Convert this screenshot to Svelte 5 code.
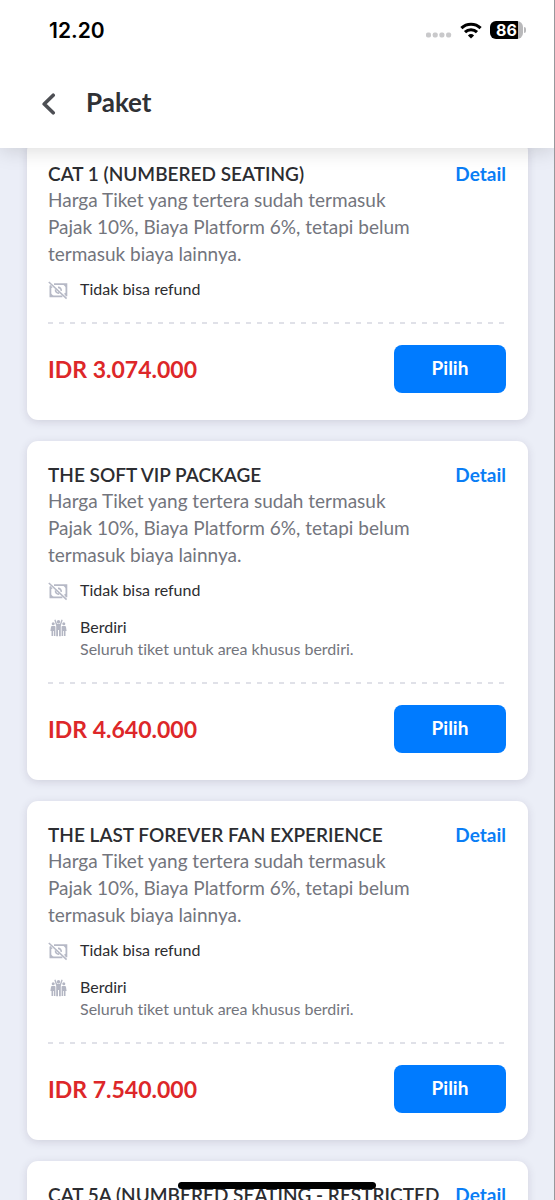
<script lang="ts">
  type Feature = { icon: 'no-refund' | 'standing'; label: string; note?: string };
  type Ticket = { name: string; price: string; features: Feature[] };

  const description =
    'Harga Tiket yang tertera sudah termasuk Pajak 10%, Biaya Platform 6%, tetapi belum termasuk biaya lainnya.';

  const noRefund: Feature = { icon: 'no-refund', label: 'Tidak bisa refund' };
  const standing: Feature = {
    icon: 'standing',
    label: 'Berdiri',
    note: 'Seluruh tiket untuk area khusus berdiri.',
  };

  const tickets: Ticket[] = [
    { name: 'CAT 1 (NUMBERED SEATING)', price: 'IDR 3.074.000', features: [noRefund] },
    { name: 'THE SOFT VIP PACKAGE', price: 'IDR 4.640.000', features: [noRefund, standing] },
    { name: 'THE LAST FOREVER FAN EXPERIENCE', price: 'IDR 7.540.000', features: [noRefund, standing] },
    { name: 'CAT 5A (NUMBERED SEATING - RESTRICTED', price: '', features: [] },
  ];
</script>

<svelte:head>
  <title>Paket</title>
</svelte:head>

<div class="screen">
  <header class="header">
    <div class="status">
      <span class="status__time">12.20</span>
      <div class="status__icons">
        <svg width="26" height="6" viewBox="0 0 26 6" fill="#c9c9cb" aria-hidden="true">
          <rect x="0" y="0.5" width="5" height="5" rx="1.8" />
          <rect x="6.7" y="0.5" width="5" height="5" rx="1.8" />
          <rect x="13.4" y="0.5" width="5" height="5" rx="1.8" />
          <rect x="20.1" y="0.5" width="5" height="5" rx="1.8" />
        </svg>
        <svg width="22" height="17" viewBox="0 0 22 17" fill="none" stroke="#000" stroke-width="3.1" aria-hidden="true">
          <path d="M1.4 6.2a13.8 13.8 0 0 1 19.2 0" />
          <path d="M5 10.1a8.7 8.7 0 0 1 12 0" />
          <path d="M11 16.6l-3.1-3.2a4.5 4.5 0 0 1 6.2 0z" fill="#000" stroke="none" />
        </svg>
        <div class="battery">
          <span class="battery__level">86</span>
        </div>
      </div>
    </div>

    <div class="titlebar">
      <button class="back" type="button" aria-label="Kembali">
        <svg width="14" height="22" viewBox="0 0 14 22" fill="none" stroke="#4d4f54" stroke-width="3.6" stroke-linecap="round" stroke-linejoin="round" aria-hidden="true">
          <path d="M11.2 2.2L2.2 11l9 8.8" />
        </svg>
      </button>
      <h1 class="titlebar__title">Paket</h1>
    </div>
  </header>

  <main class="list">
    {#each tickets as ticket}
      <article class="card">
        <div class="card__head">
          <h2 class="card__name">{ticket.name}</h2>
          <a class="card__detail" href="#detail">Detail</a>
        </div>
        <p class="card__desc">{description}</p>

        <ul class="features">
          {#each ticket.features as feature}
            <li class="feature">
              {#if feature.icon === 'no-refund'}
                <svg class="feature__icon" width="20" height="20" viewBox="0 0 20 20" fill="none" stroke="#b6b9c6" aria-hidden="true">
                  <path d="M6 4.2H18.4v12" stroke-width="1.8" />
                  <path d="M2.4 5.4v11h12" stroke-width="1.8" />
                  <path d="M2 12.6l4 4H2zM14.6 4h4v4z" fill="#b6b9c6" stroke="none" />
                  <path d="M2 8.6V5l2.6 2.4zM18.6 12.6v3.6l-2.8-2.4z" fill="#b6b9c6" stroke="none" />
                  <path d="M10 7.4a3 3 0 0 1 3.2 3.4M7.6 9.4a3 3 0 0 0 3.6 3.6" stroke-width="1.6" />
                  <path d="M0.8 2l17.8 16.6" stroke-width="1.6" />
                </svg>
              {:else}
                <svg class="feature__icon" width="20" height="20" viewBox="0 0 20 20" fill="#b3b6c3" aria-hidden="true">
                  <circle cx="10.5" cy="3.8" r="1.7" />
                  <path d="M6.3 2.1l1.2-.6 1.5 4.3h3l1.5-4.3 1.2.6-1.9 5.6v10.5h-1.8V12h-1v6.2H8.200V7.700z" />
                  <circle cx="5.200" cy="5.800" r="1.500" />
                  <path d="M4 8h2.600c.5 0 .8.3.8.8v9.200H5.800V13h-.8v5H3.500v-5H2.400l.6-4c.1-.6.5-1 1-1z" />
                  <circle cx="15.800" cy="5.800" r="1.500" />
                  <path d="M17 8h-2.600c-.5 0-.8.3-.8.8v9.200h1.600V13h.8v5h1.500v-5h1.100l-.6-4c-.1-.6-.5-1-1-1z" />
                </svg>
              {/if}
              <div>
                <p class="feature__label">{feature.label}</p>
                {#if feature.note}
                  <p class="feature__note">{feature.note}</p>
                {/if}
              </div>
            </li>
          {/each}
        </ul>

        <div class="card__foot">
          <span class="card__price">{ticket.price}</span>
          <button class="card__pick" type="button">Pilih</button>
        </div>
      </article>
    {/each}
  </main>

  <div class="home-bar"></div>
</div>

<style>
  :global(body) {
    margin: 0;
    background: #ebeef7;
  }

  h1, h2, p, ul {
    margin: 0;
    padding: 0;
  }

  .screen {
    position: relative;
    display: flex;
    flex-direction: column;
    height: 100vh;
    box-sizing: border-box;
    border-right: 1px solid #97989c;
    overflow: hidden;
    font-family: Lato, 'Open Sans', sans-serif;
    font-variant-ligatures: none;
    color: #2c2d31;
  }

  /* ── Header ── */
  .header {
    position: relative;
    z-index: 1;
    flex-shrink: 0;
    background: #fff;
    box-shadow: 0 2px 20px rgba(0, 0, 0, 0.15);
  }

  .status {
    display: flex;
    align-items: center;
    justify-content: space-between;
    height: 60px;
    padding: 0 31px 0 49px;
  }

  .status__time {
    font-family: Inter, sans-serif;
    font-size: 21px;
    font-weight: 600;
    color: #000;
  }

  .status__icons {
    display: flex;
    align-items: center;
    gap: 8px;
  }

  .status__icons svg:first-child {
    margin-top: 10px;
  }

  .battery {
    position: relative;
    width: 33px;
    height: 18px;
    border-radius: 6px;
    background: linear-gradient(to right, #000 84%, #b9b9bb 84%);
  }

  .battery::after {
    content: '';
    position: absolute;
    left: 100%;
    top: 6px;
    width: 2px;
    height: 6px;
    margin-left: 1px;
    border-radius: 0 3px 3px 0;
    background: #b9b9bb;
  }

  .battery__level {
    display: block;
    font-family: Inter, sans-serif;
    font-size: 16px;
    font-weight: 700;
    line-height: 18px;
    text-align: center;
    color: #fff;
  }

  .titlebar {
    display: flex;
    align-items: center;
    gap: 30px;
    height: 88px;
    padding: 0 42px;
  }

  .back {
    display: flex;
    padding: 0;
    border: 0;
    background: none;
    cursor: pointer;
  }

  .titlebar__title {
    padding-bottom: 4px;
    font-size: 26px;
    font-weight: 700;
    line-height: 32px;
    color: #303135;
  }

  /* ── Ticket cards ── */
  .list {
    display: flex;
    flex: 1;
    flex-direction: column;
    gap: 21px;
    margin-top: -8px;
    padding: 0 26px 21px 27px;
    overflow-y: auto;
    scrollbar-width: none;
  }

  .card {
    flex-shrink: 0;
    padding: 21px 22px 27px 21px;
    border-radius: 11px;
    background: #fff;
    box-shadow: 0 2px 9px rgba(60, 50, 80, 0.15);
  }

  .card__head {
    display: flex;
    align-items: flex-start;
    justify-content: space-between;
    gap: 8px;
  }

  .card__name {
    font-size: 19px;
    font-weight: 600;
    line-height: 25px;
  }

  .card__detail {
    font-size: 19px;
    font-weight: 700;
    line-height: 25px;
    color: #0a7df5;
    text-decoration: none;
  }

  .card__desc {
    max-width: 376px;
    font-size: 19px;
    line-height: 27px;
    color: #73757d;
  }

  .features {
    display: flex;
    flex-direction: column;
    gap: 15px;
    margin: 11px 0 22px;
    list-style: none;
  }

  .feature {
    display: flex;
    gap: 12px;
    font-size: 16px;
    line-height: 22px;
  }

  .feature__icon {
    flex-shrink: 0;
    margin-top: 2px;
  }

  .feature__note {
    color: #73757d;
  }

  .card__foot {
    display: flex;
    align-items: center;
    justify-content: space-between;
    padding-top: 23px;
    background: repeating-linear-gradient(to right, #e0e1e8 0 5px, transparent 5px 11px) top / 100% 2px no-repeat;
  }

  .card__price {
    font-size: 23px;
    font-weight: 700;
    line-height: 28px;
    color: #dd2729;
  }

  .card__pick {
    width: 112px;
    height: 48px;
    padding: 0 0 4px;
    border: 0;
    border-radius: 8px;
    background: #007bff;
    font: inherit;
    font-size: 19px;
    font-weight: 700;
    color: #fff;
    cursor: pointer;
  }

  .home-bar {
    position: absolute;
    bottom: 11px;
    left: 50%;
    z-index: 2;
    width: 198px;
    height: 7px;
    border-radius: 4px;
    background: #000;
    transform: translateX(-50%);
  }
</style>
